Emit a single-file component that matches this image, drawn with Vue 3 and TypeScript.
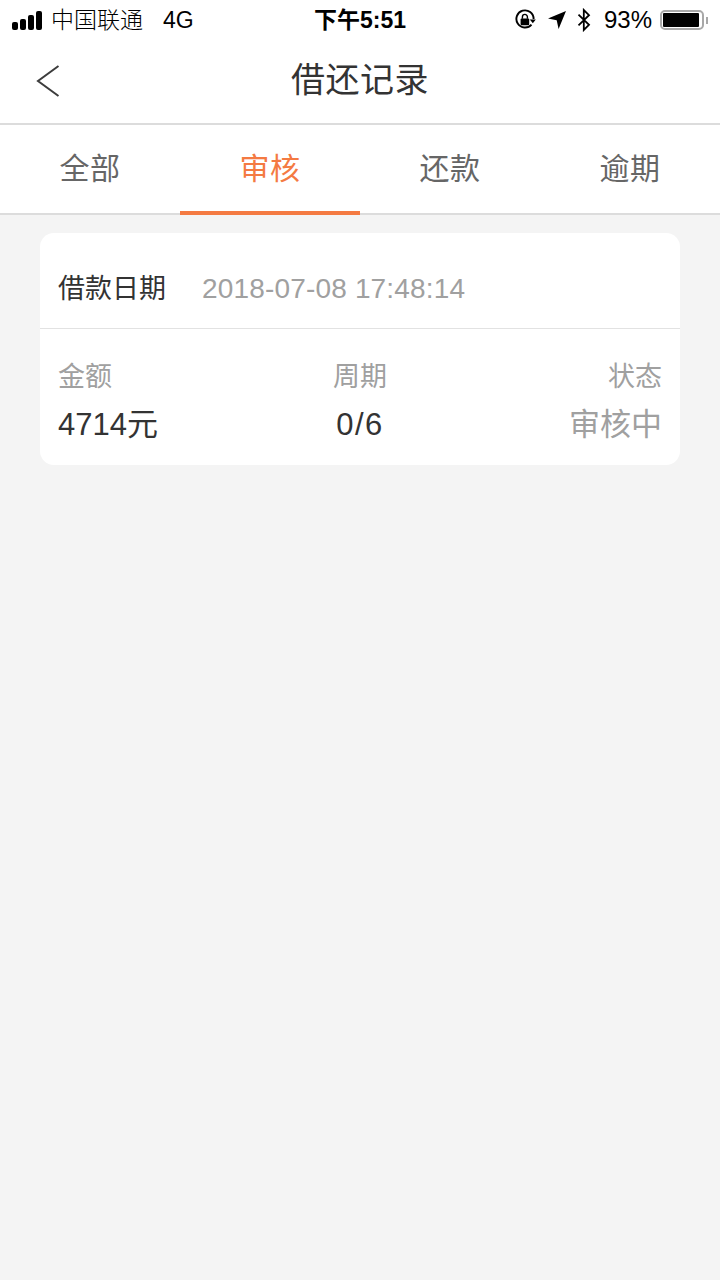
<template>
  <div class="page">
    <div class="status-bar">
      <div class="status-left">
        <div class="signal">
          <i v-for="h in signalBars" :key="h" :style="{ height: h + 'px' }"></i>
        </div>
        <span class="carrier">中国联通</span>
        <span class="net">4G</span>
      </div>
      <div class="status-time">下午5:51</div>
      <div class="status-right">
        <svg class="ic-lock" width="22" height="22" viewBox="0 0 22 22">
          <path d="M17.5 15.6A8.6 8.6 0 1 1 19.6 10" fill="none" stroke="#000" stroke-width="1.9" />
          <path d="M16.4 10h6l-3 3.6z" fill="#000" transform="translate(-.6 .6)" />
          <rect x="6.6" y="9.6" width="8.6" height="6.6" rx="1" fill="#000" />
          <path d="M8.4 9.8V7.9a2.5 2.5 0 0 1 5 0v1.9" fill="none" stroke="#000" stroke-width="1.4" />
        </svg>
        <svg width="20" height="20" viewBox="0 0 20 20">
          <path d="M19 1 11.6 19l-1.9-8.7L1 8.4z" fill="#000" />
        </svg>
        <svg width="14" height="24" viewBox="0 0 14 24">
          <path d="M1.5 6.6 12 16.8 6.8 22V2l5.2 5.2L1.5 17.4" fill="none" stroke="#000" stroke-width="1.8" />
        </svg>
        <span class="pct">93%</span>
        <div class="battery"><div class="battery-fill"></div></div>
        <div class="battery-cap"></div>
      </div>
    </div>

    <div class="nav">
      <svg class="back" width="26" height="34" viewBox="0 0 26 34">
        <path d="M23.5 2 3 17l20.5 15" fill="none" stroke="#3c3c3c" stroke-width="2" />
      </svg>
      <div class="title">借还记录</div>
    </div>

    <div class="tabs">
      <div
        v-for="(tab, i) in tabs"
        :key="tab"
        class="tab"
        :class="{ active: i === current }"
      >{{ tab }}</div>
    </div>

    <div class="content">
      <div class="card">
        <div class="card-head">
          <span class="head-label">借款日期</span>
          <span class="head-date">2018-07-08 17:48:14</span>
        </div>
        <div class="card-body">
          <div class="col">
            <span class="label">金额</span>
            <span class="value">4714元</span>
          </div>
          <div class="col center">
            <span class="label">周期</span>
            <span class="value wide">0/6</span>
          </div>
          <div class="col right">
            <span class="label">状态</span>
            <span class="value muted">审核中</span>
          </div>
        </div>
      </div>
    </div>
  </div>
</template>

<script setup lang="ts">
const signalBars = [8, 11, 15, 19]
const tabs = ['全部', '审核', '还款', '逾期']
const current = 1
</script>

<style>
html,
body {
  margin: 0;
  background: #f4f4f4;
}
</style>

<style scoped>
.page {
  width: 720px;
  height: 1280px;
  background: #f4f4f4;
  font-family: "Liberation Sans", "Noto Sans CJK SC", sans-serif;
  overflow: hidden;
  display: flex;
  flex-direction: column;
}

.status-bar {
  height: 40px;
  background: #fff;
  display: grid;
  grid-template-columns: 1fr auto 1fr;
  align-items: center;
  color: #000;
  font-size: 22px;
}

.status-left {
  display: flex;
  align-items: baseline;
  padding-left: 12px;
  line-height: 40px;
}

.signal {
  display: flex;
  align-items: flex-end;
  gap: 2px;
  width: 32px;
  align-self: center;
}

.signal i {
  display: block;
  width: 6px;
  background: #000;
  border-radius: 2px;
}

.carrier {
  margin-left: 7px;
  font-size: 23px;
  font-weight: 300;
}

.net {
  margin-left: 20px;
  font-size: 23px;
}

.status-time {
  font-size: 23px;
  font-weight: 700;
  line-height: 40px;
}

.status-right {
  display: flex;
  align-items: center;
  justify-content: flex-end;
  padding-right: 12px;
}

.ic-lock {
  margin-right: 11px;
}

.status-right svg + svg {
  margin-right: 10px;
}

.pct {
  margin-left: 3px;
  font-size: 24px;
  line-height: 40px;
}

.battery {
  margin-left: 8px;
  width: 44px;
  height: 20px;
  box-sizing: border-box;
  border: 2px solid #a8a8a8;
  border-radius: 5px;
  padding: 1px;
}

.battery-fill {
  width: 94%;
  height: 100%;
  background: #000;
  border-radius: 1px;
}

.battery-cap {
  width: 2px;
  height: 7px;
  margin-left: 2px;
  background: #a8a8a8;
}

.nav {
  height: 83px;
  box-sizing: content-box;
  background: #fff;
  border-bottom: 2px solid #dcdcdc;
  display: flex;
  justify-content: center;
  position: relative;
}

.back {
  position: absolute;
  left: 35px;
  top: 24px;
}

.title {
  font-size: 34px;
  line-height: 80px;
  letter-spacing: 0.5px;
  color: #333;
}

.tabs {
  height: 88px;
  background: #fff;
  border-bottom: 2px solid #dcdcdc;
  display: flex;
}

.tab {
  flex: 1;
  height: 90px;
  box-sizing: border-box;
  border-bottom: 4px solid transparent;
  font-size: 30px;
  line-height: 88px;
  letter-spacing: 0.5px;
  color: #666;
  text-align: center;
}

.tab.active {
  color: #f47a42;
  border-bottom-color: #f47a42;
}

.content {
  padding: 18px 40px 0;
}

.card {
  background: #fff;
  border-radius: 14px;
  overflow: hidden;
}

.card-head {
  height: 96px;
  box-sizing: border-box;
  border-bottom: 1px solid #e2e2e2;
  padding: 36px 18px 0;
  display: flex;
  align-items: baseline;
  line-height: 40px;
}

.head-label {
  font-size: 27px;
  color: #333;
}

.head-date {
  margin-left: 36px;
  font-size: 28px;
  letter-spacing: 0.17px;
  color: #a0a0a0;
}

.card-body {
  height: 136px;
  padding: 0 18px;
  display: flex;
  justify-content: space-between;
  align-items: flex-start;
}

.col {
  flex: 1;
  display: flex;
  flex-direction: column;
  padding-top: 28px;
}

.col.center {
  align-items: center;
}

.col.right {
  align-items: flex-end;
}

.label {
  font-size: 27px;
  line-height: 40px;
  color: #a0a0a0;
}

.value {
  margin-top: 8px;
  font-size: 31px;
  line-height: 40px;
  color: #333;
}

.value.wide {
  letter-spacing: 1.5px;
}

.value.muted {
  color: #a0a0a0;
}
</style>
